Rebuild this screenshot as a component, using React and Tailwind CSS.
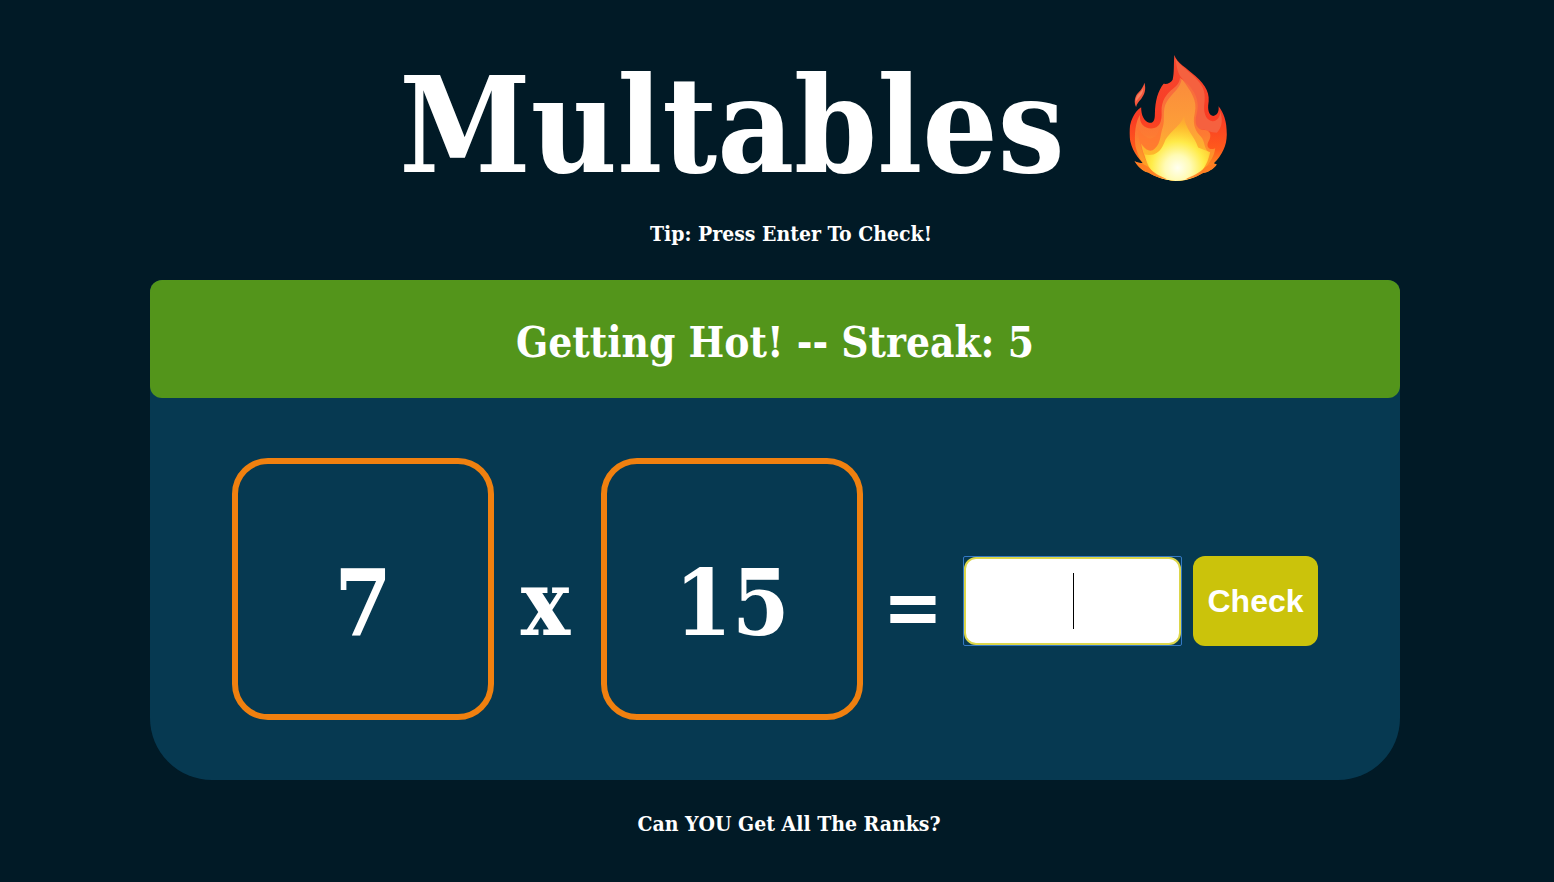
const slab = "font-['DejaVu_Serif_Condensed','DejaVu_Serif',serif]";

function Flame() {
  return (
    <svg className="mb-4 h-[126px] w-[98px] shrink-0" viewBox="80 48 292 376" role="img" aria-label="Fire">
      <defs>
        <linearGradient id="outer" x1="0" y1="0" x2="0" y2="1">
          <stop offset="0" stopColor="#f5482f" />
          <stop offset="0.5" stopColor="#f93c24" />
          <stop offset="0.75" stopColor="#ff5a1c" />
          <stop offset="1" stopColor="#ffb52a" />
        </linearGradient>
        <linearGradient id="middle" x1="0" y1="0" x2="0" y2="1">
          <stop offset="0" stopColor="#f7693f" />
          <stop offset="0.55" stopColor="#fd7a33" />
          <stop offset="1" stopColor="#ffb51f" />
        </linearGradient>
        <linearGradient id="inner" x1="0" y1="0" x2="0" y2="1">
          <stop offset="0" stopColor="#fa8a3c" />
          <stop offset="0.5" stopColor="#fda038" />
          <stop offset="1" stopColor="#ffd21c" />
        </linearGradient>
        <radialGradient id="glow" gradientUnits="userSpaceOnUse" cx="225" cy="385" r="175">
          <stop offset="0" stopColor="#fffff0" />
          <stop offset="0.22" stopColor="#fffbb5" />
          <stop offset="0.45" stopColor="#ffee4a" stopOpacity="0.95" />
          <stop offset="0.72" stopColor="#ffc928" stopOpacity="0.6" />
          <stop offset="1" stopColor="#ff9a28" stopOpacity="0" />
        </radialGradient>
        <clipPath id="body">
          <path d="M215 48C222 72 252 86 278 111C310 140 323 164 316 199C315 217 320 229 331 230C344 228 349 216 347 201C362 219 372 247 372 286C371 319 358 347 333 371L342 375C332 389 315 399 299 401C274 417 247 424 218 424C184 422 157 411 137 399C119 394 106 381 96 364C104 368 113 370 121 370C97 347 81 316 81 281C81 248 94 219 116 204C116 227 124 246 140 250C153 252 157 243 157 224C158 184 166 156 183 134C194 136 205 131 210 122C215 101 213 74 215 48Z" />
        </clipPath>
      </defs>
      <path fill="#f4563c" d="M126 131C131 151 127 165 116 179C108 188 103 193 101 203C94 190 96 172 108 160C118 151 122 142 126 131Z" />
      <path fill="#f98261" d="M122 146C123 159 117 168 109 176C103 182 101 186 100 190C99 177 103 169 111 162C117 157 120 152 122 146Z" />
      <g clipPath="url(#body)">
        <rect x="80" y="48" width="292" height="376" fill="url(#outer)" />
        <path fill="#f5613f" d="M218 58C231 82 264 99 287 126C311 153 306 177 304 202C303 226 312 244 330 246C342 245 352 234 352 216C362 246 355 268 342 280C321 279 310 270 299 271C276 273 271 252 279 223C288 182 265 152 239 119C225 105 223 88 218 58Z" />
        <path fill="url(#middle)" d="M232 116C269 141 294 180 282 222C272 255 284 272 304 272C321 271 329 287 317 306C308 323 321 334 337 326C334 366 283 424 220 424C163 424 117 389 99 320C95 284 99 246 113 226C109 253 127 266 145 267C169 268 179 250 177 216C176 186 191 164 211 149C224 139 231 130 232 116Z" />
        <path fill="#ff7630" d="M105 264C118 289 138 301 151 296C165 291 171 276 175 251L207 237L216 423C164 424 118 382 105 264Z" opacity="0.7" />
        <path fill="url(#inner)" d="M237 119C265 157 285 183 276 222C267 259 282 280 294 291C307 304 302 326 318 339C312 382 275 424 220 424C170 424 126 377 116 312C127 328 142 342 157 327C176 309 172 286 181 262C188 242 178 211 192 188C209 161 234 147 237 119Z" />
        <path fill="url(#glow)" d="M245 229C243 264 277 291 286 324L322 338C312 386 284 424 220 424C164 424 133 389 127 345C151 350 172 342 184 312C195 278 230 266 245 229Z" />
        <path fill="#ff7a22" d="M96 364C114 375 130 370 144 389C158 404 178 411 193 419C155 413 112 393 96 364Z" opacity="0.85" />
        <path fill="#ff7a22" d="M342 375C326 374 312 376 300 390C282 405 261 412 247 420C287 413 325 398 342 375Z" opacity="0.85" />
      </g>
    </svg>
  );
}

function NumberBox({ children }) {
  return (
    <div className="flex size-[262px] shrink-0 items-center justify-center rounded-[36px] border-6 border-[#f0800f] pt-7">
      {children}
    </div>
  );
}

export default function App() {
  return (
    <main className={`${slab} min-h-screen bg-[#011a26] pt-11 pr-[154px] pb-8 pl-[150px] font-bold text-white`}>
      <header className="text-center">
        <h1 className="flex items-center justify-center gap-16 pl-[76px] text-[132px] leading-[164px]">
          Multables
          <Flame />
        </h1>
        <p className="pl-8 text-[21px] leading-[52px]">Tip: Press Enter To Check!</p>
      </header>

      <section className="mt-5 rounded-t-xl rounded-b-[62px] bg-[#063951]">
        <h2 className="rounded-xl bg-[#53951b] pt-7 pb-5 text-center text-[42px] leading-[70px]">
          Getting Hot! -- Streak: 5
        </h2>
        <form
          className="flex items-center justify-center py-[60px] text-[92px] leading-none"
          onSubmit={(event) => event.preventDefault()}
        >
          <NumberBox>7</NumberBox>
          <span className="w-[107px] shrink-0 pt-7 pr-1 text-center">x</span>
          <NumberBox>15</NumberBox>
          <span className="w-[100px] shrink-0 pt-9 text-center text-[80px]">=</span>
          <div className="flex shrink-0 items-center gap-[11px] pt-6">
            <div className="relative h-[90px] w-[219px] rounded-xs border border-[#3579c4]">
              <input
                type="text"
                aria-label="Answer"
                className="block h-full w-full rounded-xl border-2 border-[#dcd64a] bg-white text-center text-[48px] text-black caret-transparent outline-none"
              />
              <span className="pointer-events-none absolute top-4 left-1/2 h-14 w-px bg-black" />
            </div>
            <button
              type="submit"
              className="h-[90px] w-[125px] rounded-xl bg-[#cbc30b] font-['Liberation_Sans',Arial,sans-serif] text-[32px] font-bold"
            >
              Check
            </button>
          </div>
        </form>
      </section>

      <footer className="mt-5 pl-7 text-center text-[21px] leading-[48px]">Can YOU Get All The Ranks?</footer>
    </main>
  );
}
